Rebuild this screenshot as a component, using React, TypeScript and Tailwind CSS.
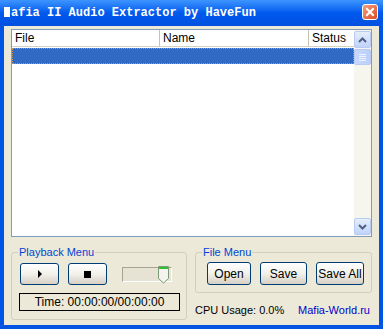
import React from "react";

const btn =
  "flex items-center justify-center rounded-[3px] border border-[#003c74] bg-gradient-to-b from-[#ffffff] via-[#f2f1ea] to-[#d6d0c5] text-black";

export default function App() {
  return (
    <div
      className="w-[383px] h-[329px] flex flex-col bg-[#0054e3] overflow-hidden"
      style={{ fontFamily: '"Liberation Sans", Arial, sans-serif' }}
    >
      {/* Title bar */}
      <div className="h-[26px] flex items-center pl-[4px] pr-[5px] bg-gradient-to-b from-[#3d95ff] via-[#0058ee] to-[#0050e0] shrink-0">
        <span
          className="flex-1 min-w-0 whitespace-nowrap text-white font-bold text-[12px] leading-none"
          style={{ fontFamily: '"Liberation Mono", "DejaVu Sans Mono", monospace' }}
        >
          <span className="inline-block w-[6px] h-[10px] bg-white mr-[1px] align-[-1px]"></span>afia II Audio Extractor by HaveFun
        </span>
        <div className="w-[16px] h-[16px] mt-[-2px] shrink-0 rounded-[3px] border border-white bg-gradient-to-br from-[#f0a080] to-[#d9481c] flex items-center justify-center">
          <svg width="10" height="10" viewBox="0 0 10 10">
            <path d="M2 2 L8 8 M8 2 L2 8" stroke="white" strokeWidth="2" strokeLinecap="square" />
          </svg>
        </div>
      </div>

      {/* Body */}
      <div className="flex-1 mx-[4px] mb-[4px] bg-[#ece9d8] flex flex-col px-[7px] pt-[3px]">
        {/* List view */}
        <div className="h-[208px] border border-[#7f9db9] bg-white flex shrink-0">
          <div className="flex-1 flex flex-col">
            <div className="h-[17px] flex text-[12px] text-black border-b border-[#d6d2c2]">
              <div className="w-[148px] border-r border-[#c5c2b2] pl-[3px] leading-[17px]">File</div>
              <div className="w-[149px] border-r border-[#c5c2b2] pl-[3px] leading-[17px]">Name</div>
              <div className="flex-1 pl-[3px] leading-[17px]">Status</div>
            </div>
            <div className="mt-[1px] h-[16px] bg-[#316ac5] border border-dotted border-[#c89048]"></div>
          </div>
          {/* Scrollbar */}
          <div className="w-[17px] bg-[#f6f5ee] flex flex-col justify-between pt-[1px] pb-[1px]">
            <div>
              <div className="h-[17px] rounded-[2px] border border-[#b8cbf3] bg-gradient-to-b from-[#e6eefc] to-[#c1d3fb] flex items-center justify-center">
                <svg width="9" height="6" viewBox="0 0 9 6">
                  <path d="M1 5 L4.5 1.5 L8 5" stroke="#4d6185" strokeWidth="2" fill="none" />
                </svg>
              </div>
              <div className="mt-[1px] h-[16px] rounded-[2px] border border-[#b8cbf3] bg-gradient-to-r from-[#c9d8fc] to-[#bccefa] flex flex-col items-center justify-center gap-[1px]">
                <div className="w-[7px] h-[1px] bg-[#eef4fe]"></div>
                <div className="w-[7px] h-[1px] bg-[#eef4fe]"></div>
                <div className="w-[7px] h-[1px] bg-[#eef4fe]"></div>
                <div className="w-[7px] h-[1px] bg-[#eef4fe]"></div>
              </div>
            </div>
            <div className="h-[17px] rounded-[2px] border border-[#b8cbf3] bg-gradient-to-b from-[#e6eefc] to-[#c1d3fb] flex items-center justify-center">
              <svg width="9" height="6" viewBox="0 0 9 6">
                <path d="M1 1 L4.5 4.5 L8 1" stroke="#4d6185" strokeWidth="2" fill="none" />
              </svg>
            </div>
          </div>
        </div>

        {/* Bottom area */}
        <div className="flex mt-[15px] gap-[8px]">
          {/* Playback group */}
          <div className="relative w-[176px] h-[68px] border border-[#d0d0bf] rounded-[3px] shrink-0">
            <span className="absolute left-[6px] top-[-9px] px-[1px] bg-[#ece9d8] text-[11px] text-[#0046d5] leading-[16px]">
              Playback Menu
            </span>
            <div className="flex items-center pl-[8px] pt-[10px]">
              <div className={`${btn} w-[39px] h-[22px]`}>
                <svg width="6" height="8" viewBox="0 0 6 8">
                  <path d="M1 0 L5 4 L1 8 Z" fill="black" />
                </svg>
              </div>
              <div className={`${btn} w-[39px] h-[22px] ml-[9px]`}>
                <div className="w-[7px] h-[7px] bg-black"></div>
              </div>
              <div className="relative ml-[15px] w-[50px] h-[15px] border border-[#a6a395] border-r-white border-b-white bg-[#e6e3d4]">
                <div className="absolute right-[2px] top-[-2px]">
                  <svg width="11" height="18" viewBox="0 0 11 18">
                    <path d="M0.5 0.5 H10.5 V12.5 L5.5 17 L0.5 12.5 Z" fill="#f4f3ee" stroke="#7a9a76" />
                    <rect x="1" y="1" width="9" height="2" fill="#30c030" />
                  </svg>
                </div>
              </div>
            </div>
            <div className="ml-[7px] mt-[8px] w-[161px] h-[18px] border border-black flex items-center justify-center text-[12px] text-black">
              Time: 00:00:00/00:00:00
            </div>
          </div>

          {/* File menu + status */}
          <div className="flex-1 flex flex-col">
            <div className="relative h-[41px] border border-[#d0d0bf] rounded-[3px] flex items-start pl-[11px] pt-[9px] gap-[9px]">
              <span className="absolute left-[6px] top-[-9px] px-[1px] bg-[#ece9d8] text-[11px] text-[#0046d5] leading-[16px]">
                File Menu
              </span>
              <div className={`${btn} w-[44px] h-[23px] text-[12px]`}>Open</div>
              <div className={`${btn} w-[47px] h-[23px] text-[12px]`}>Save</div>
              <div className={`${btn} w-[48px] h-[23px] text-[12px]`}>Save All</div>
            </div>
            <div className="flex justify-between items-center mt-[10px] pr-[2px] text-[11px] whitespace-nowrap leading-[14px]">
              <span className="text-black">CPU Usage: 0.0%</span>
              <span className="text-[#0000cc]">Mafia-World.ru</span>
            </div>
          </div>
        </div>
      </div>
    </div>
  );
}
